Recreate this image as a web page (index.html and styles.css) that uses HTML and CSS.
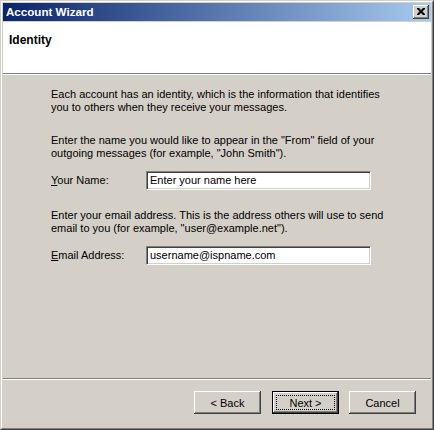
FILE: index.html
```html
<!DOCTYPE html>
<html>
<head>
<meta charset="utf-8">
<link rel="stylesheet" href="styles.css">
</head>
<body>
<div class="window">
  <div class="frame">
    <div class="titlebar">
      <span class="title">Account Wizard</span>
      <button class="close" aria-label="Close">
        <svg width="8" height="7" viewBox="0 0 8 7"><path d="M0 0h2l2 2 2-2h2v1l-2.5 2.5L8 6v1H6L4 5 2 7H0V6l2.5-2.5L0 1z" fill="#000"/></svg>
      </button>
    </div>
    <div class="client">
      <div class="header">Identity</div>
      <div class="content">
        <p class="p1">Each account has an identity, which is the information that identifies you to others when they receive your messages.</p>
        <p class="p2">Enter the name you would like to appear in the "From" field of your outgoing messages (for example, "John Smith").</p>
        <div class="row">
          <label class="label"><u>Y</u>our Name:</label>
          <div class="input">Enter your name here</div>
        </div>
        <p class="p3">Enter your email address. This is the address others will use to send email to you (for example, "user@example.net").</p>
        <div class="row">
          <label class="label"><u>E</u>mail Address:</label>
          <div class="input">username@ispname.com</div>
        </div>
      </div>
      <div class="footer">
        <button class="btn">&lt; Back</button>
        <button class="btn default"><span class="focus">Next &gt;</span></button>
        <button class="btn cancel">Cancel</button>
      </div>
    </div>
  </div>
</div>
</body>
</html>
```
FILE: styles.css
```css
html, body {
  margin: 0;
  padding: 0;
  background: #d4d0c8;
}
body {
  font-family: "Liberation Sans", Arial, sans-serif;
  font-size: 11px;
  color: #000;
}
.window {
  width: 434px;
  height: 430px;
  box-sizing: border-box;
  border: 1px solid;
  border-color: #d4d0c8 #404040 #404040 #d4d0c8;
}
.frame {
  height: 100%;
  box-sizing: border-box;
  border: 1px solid;
  border-color: #ffffff #808080 #808080 #ffffff;
  padding: 1px;
  display: flex;
  flex-direction: column;
  background: #d4d0c8;
}
.titlebar {
  height: 18px;
  flex: none;
  display: flex;
  align-items: center;
  justify-content: space-between;
  background: linear-gradient(to right, #0a246a, #a6caf0);
  padding: 0 2px 0 3px;
  margin-bottom: 1px;
}
.title {
  color: #fff;
  font-weight: bold;
  font-size: 11.6px;
  line-height: 18px;
}
.close {
  width: 16px;
  height: 14px;
  box-sizing: border-box;
  padding: 0;
  margin: 0;
  background: #d4d0c8;
  border: none;
  box-shadow: inset -1px -1px #404040, inset 1px 1px #ffffff, inset -2px -2px #808080, inset 2px 2px #d4d0c8;
  display: flex;
  align-items: center;
  justify-content: center;
}
.close svg { display: block; margin-top: -1px; }
.client {
  flex: 1;
  display: flex;
  flex-direction: column;
}
.header {
  height: 52px;
  box-sizing: border-box;
  background: #fff;
  font-weight: bold;
  font-size: 12px;
  line-height: 13px;
  padding: 12px 0 0 6px;
  border-bottom: 1px solid #808080;
  box-shadow: 0 1px 0 #ffffff;
  flex: none;
}
.content {
  flex: 1;
  padding: 14px 0 0 48px;
  line-height: 13px;
}
.content p {
  margin: 0;
  width: 340px;
}
.p2 { margin-top: 20px !important; }
.p3 { margin-top: 19px !important; }
.row {
  display: flex;
  align-items: center;
  margin-top: 11px;
  height: 19px;
}
.label {
  width: 95px;
}
.input {
  width: 225px;
  height: 19px;
  box-sizing: border-box;
  background: #fff;
  border: 1px solid;
  border-color: #808080 #ffffff #ffffff #808080;
  box-shadow: inset 1px 1px #404040, inset -1px -1px #d4d0c8;
  padding: 0 0 0 3px;
  line-height: 17px;
}
.footer {
  flex: none;
  border-top: 1px solid #808080;
  box-shadow: inset 0 1px #ffffff;
  padding: 12px 15px 13px 0;
  display: flex;
  justify-content: flex-end;
  gap: 11px;
}
.btn {
  width: 67px;
  height: 23px;
  box-sizing: border-box;
  font-family: "Liberation Sans", Arial, sans-serif;
  font-size: 11px;
  color: #000;
  background: #d4d0c8;
  border: none;
  padding: 0;
  margin: 0;
  box-shadow: inset -1px -1px #404040, inset 1px 1px #ffffff, inset -2px -2px #808080, inset 2px 2px #d4d0c8;
}
.btn.cancel { margin-left: -1px; }
.btn.default {
  border: 1px solid #000;
  box-shadow: inset -1px -1px #404040, inset 1px 1px #ffffff, inset -2px -2px #808080, inset 2px 2px #d4d0c8;
  padding: 3px;
}
.focus {
  display: flex;
  align-items: center;
  justify-content: center;
  height: 100%;
  box-sizing: border-box;
  outline: 1px dotted #000;
  outline-offset: -1px;
}
```
